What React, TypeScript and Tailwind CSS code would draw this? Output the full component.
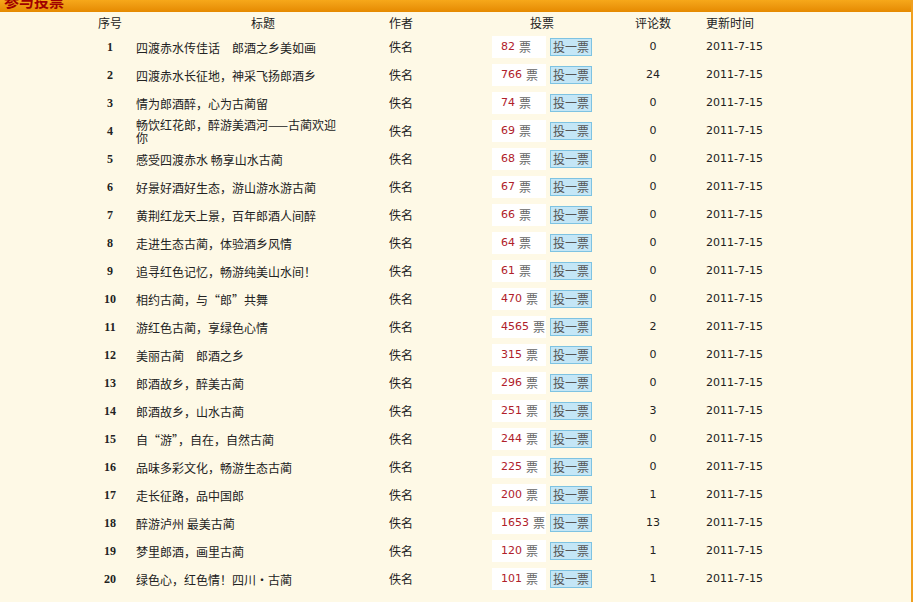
import React from "react";

const rows: [string, number, number][] = [
  ["四渡赤水传佳话　郎酒之乡美如画", 82, 0],
  ["四渡赤水长征地，神采飞扬郎酒乡", 766, 24],
  ["情为郎酒醉，心为古蔺留", 74, 0],
  ["畅饮红花郎，醉游美酒河——古蔺欢迎你", 69, 0],
  ["感受四渡赤水 畅享山水古蔺", 68, 0],
  ["好景好酒好生态，游山游水游古蔺", 67, 0],
  ["黄荆红龙天上景，百年郎酒人间醉", 66, 0],
  ["走进生态古蔺，体验酒乡风情", 64, 0],
  ["追寻红色记忆，畅游纯美山水间！", 61, 0],
  ["相约古蔺，与“郎”共舞", 470, 0],
  ["游红色古蔺，享绿色心情", 4565, 2],
  ["美丽古蔺　郎酒之乡", 315, 0],
  ["郎酒故乡，醉美古蔺", 296, 0],
  ["郎酒故乡，山水古蔺", 251, 3],
  ["自“游”，自在，自然古蔺", 244, 0],
  ["品味多彩文化，畅游生态古蔺", 225, 0],
  ["走长征路，品中国郎", 200, 1],
  ["醉游泸州 最美古蔺", 1653, 13],
  ["梦里郎酒，画里古蔺", 120, 1],
  ["绿色心，红色情！四川·古蔺", 101, 1],
];

export default function App() {
  return (
    <div
      className="w-[913px] h-[602px] overflow-hidden bg-[#fef9e6] text-[12px] text-[#222] border-r-2 border-[#f0a020]"
      style={{ fontFamily: '"Noto Sans CJK SC", "Liberation Sans", sans-serif' }}
    >
      <div className="h-[12px] overflow-hidden bg-gradient-to-b from-[#f6a81a] to-[#e58a00]">
        <div className="-mt-[9px] pl-[4px] text-[15px] font-bold text-[#a00000] leading-[20px]">参与投票</div>
      </div>
      <div className="flex h-[21px] items-center pl-[90px]">
        <div className="w-[40px] text-center">序号</div>
        <div className="w-[226px] pl-[40px] text-center">标题</div>
        <div className="w-[90px] text-center">作者</div>
        <div className="w-[146px] pl-[46px] text-center">投票</div>
        <div className="w-[90px] ml-[16px] text-center">评论数</div>
        <div className="ml-[8px]">更新时间</div>
      </div>
      {rows.map(([title, votes, comments], i) => (
        <div key={i} className="flex h-[28px] items-center pl-[90px]">
          <div className="w-[40px] text-center font-bold" style={{ fontFamily: '"Liberation Serif", serif' }}>{i + 1}</div>
          <div className="w-[226px] pl-[6px] pr-[10px] leading-[13px]">{title}</div>
          <div className="w-[90px] text-center">佚名</div>
          <div className="w-[46px]" />
          <div className="w-[54px] h-[22px] bg-white flex items-center pl-[9px] gap-[4px]">
            <span className="text-[#b0202a]" style={{ fontFamily: '"DejaVu Sans", sans-serif', fontSize: 11 }}>{votes}</span>
            <span className="text-[#666]">票</span>
          </div>
          <div className="ml-[4px] w-[42px] h-[18px] bg-[#c4e6f6] border border-[#7ec3e2] text-[#555] text-center leading-[16px]">投一票</div>
          <div className="w-[90px] ml-[16px] text-center" style={{ fontFamily: '"DejaVu Sans", sans-serif', fontSize: 11 }}>{comments}</div>
          <div className="ml-[8px]" style={{ fontFamily: '"DejaVu Sans", sans-serif', fontSize: 11 }}>2011-7-15</div>
        </div>
      ))}
    </div>
  );
}
